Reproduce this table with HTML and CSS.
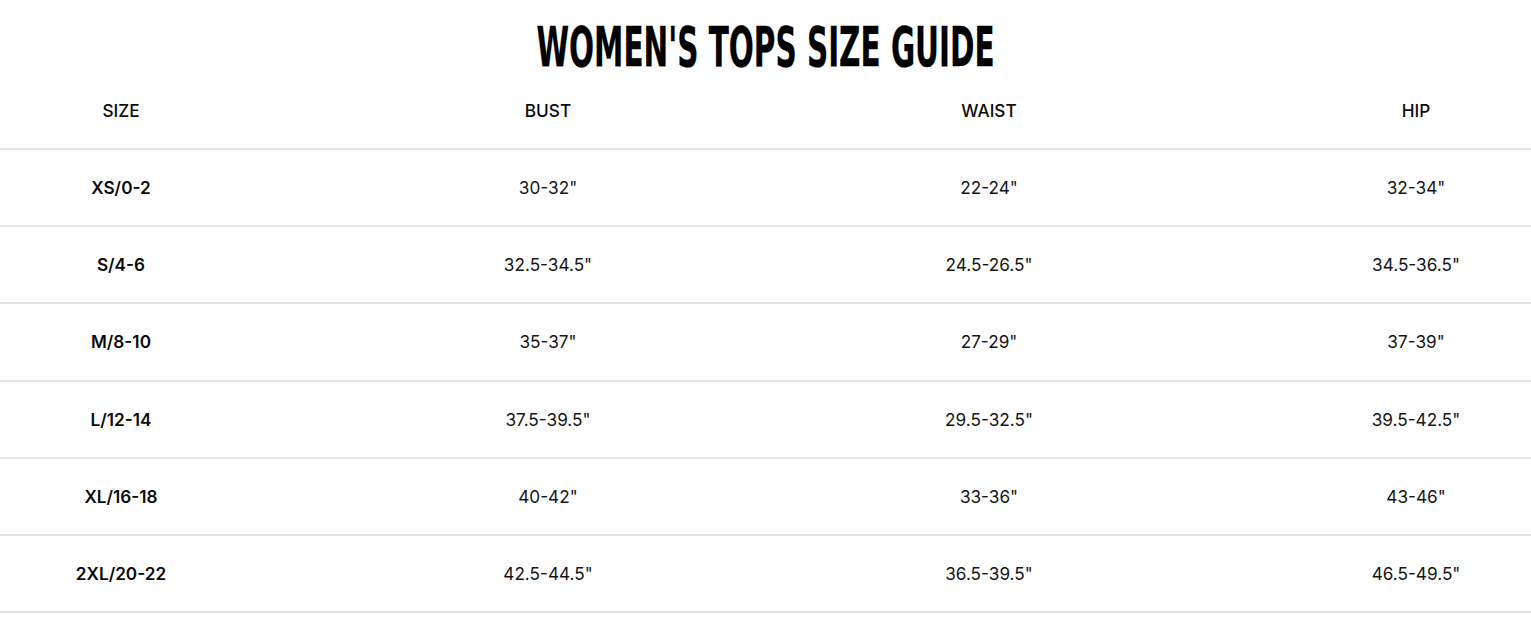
FILE: index.html
```html
<!DOCTYPE html>
<html lang="en">
<head>
<meta charset="utf-8">
<title>Women's Tops Size Guide</title>
<link rel="stylesheet" href="styles.css">
</head>
<body>
<main class="guide">
  <h1 class="title"><span class="title-text">WOMEN'S TOPS SIZE GUIDE</span></h1>
  <div class="table">
    <div class="row head">
      <div class="cell">SIZE</div>
      <div class="cell">BUST</div>
      <div class="cell">WAIST</div>
      <div class="cell">HIP</div>
    </div>
    <div class="row">
      <div class="cell size">XS/0-2</div>
      <div class="cell">30-32"</div>
      <div class="cell">22-24"</div>
      <div class="cell">32-34"</div>
    </div>
    <div class="row">
      <div class="cell size">S/4-6</div>
      <div class="cell">32.5-34.5"</div>
      <div class="cell">24.5-26.5"</div>
      <div class="cell">34.5-36.5"</div>
    </div>
    <div class="row">
      <div class="cell size">M/8-10</div>
      <div class="cell">35-37"</div>
      <div class="cell">27-29"</div>
      <div class="cell">37-39"</div>
    </div>
    <div class="row">
      <div class="cell size">L/12-14</div>
      <div class="cell">37.5-39.5"</div>
      <div class="cell">29.5-32.5"</div>
      <div class="cell">39.5-42.5"</div>
    </div>
    <div class="row">
      <div class="cell size">XL/16-18</div>
      <div class="cell">40-42"</div>
      <div class="cell">33-36"</div>
      <div class="cell">43-46"</div>
    </div>
    <div class="row">
      <div class="cell size">2XL/20-22</div>
      <div class="cell">42.5-44.5"</div>
      <div class="cell">36.5-39.5"</div>
      <div class="cell">46.5-49.5"</div>
    </div>
  </div>
</main>
</body>
</html>
```

FILE: styles.css
```css
*, *::before, *::after {
  box-sizing: border-box;
}

html, body {
  margin: 0;
  padding: 0;
  background: #ffffff;
}

body {
  font-family: Inter, "Noto Sans", "Liberation Sans", sans-serif;
  color: #151515;
}

.guide {
  width: 1531px;
}

.title {
  margin: 0;
  height: 80px;
  display: flex;
  align-items: center;
  justify-content: center;
  font-family: "DejaVu Sans Condensed", "Liberation Sans", sans-serif;
  font-weight: 700;
  font-size: 56px;
  line-height: 1;
  color: #000000;
}

.title-text {
  display: inline-block;
  transform: scaleX(0.585);
  -webkit-text-stroke: 0.3px #000000;
  padding-top: 13px;
  white-space: nowrap;
}

.table {
  display: flex;
  flex-direction: column;
}

.row {
  display: flex;
  justify-content: space-between;
  align-items: center;
  padding-left: 6px;
  height: 77.2px;
  border-bottom: 2px solid #e2e2e2;
  font-size: 17.2px;
}

.row.head {
  height: 70px;
  padding-bottom: 8px;
  font-weight: 500;
  color: #0a0a0a;
}

.cell {
  width: 230px;
  text-align: center;
}

.cell:nth-child(2) {
  margin-right: 7px;
}

.cell:nth-child(3) {
  margin-left: 7px;
}

.cell.size {
  font-weight: 600;
  color: #0a0a0a;
}
```
